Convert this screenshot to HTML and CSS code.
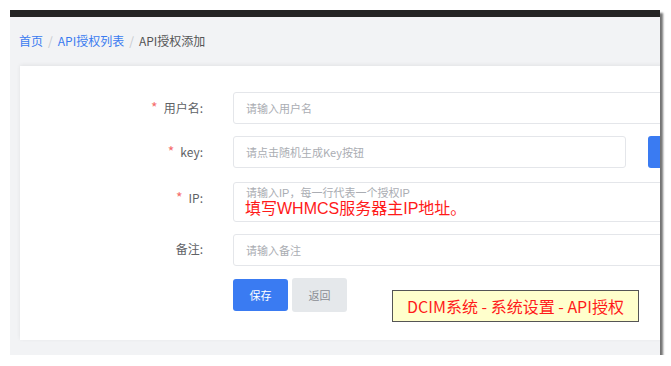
FILE: index.html
```html
<!DOCTYPE html>
<html lang="zh-CN">
<head>
<meta charset="utf-8">
<link rel="stylesheet" href="styles.css">
</head>
<body>
<div class="window">
  <div class="topbar"></div>
  <div class="content">
    <div class="breadcrumb">
      <a class="crumb-link">首页</a><span class="sep">/</span><a class="crumb-link">API授权列表</a><span class="sep">/</span><span class="crumb-current">API授权添加</span>
    </div>
    <div class="card">
      <div class="form">
        <div class="row">
          <label class="label"><span class="req">*</span>用户名:</label>
          <div class="field"><div class="input wide">请输入用户名</div></div>
        </div>
        <div class="row">
          <label class="label"><span class="req">*</span>key:</label>
          <div class="field key-field"><div class="input key">请点击随机生成Key按钮</div><div class="gen-btn"></div></div>
        </div>
        <div class="row row-ip">
          <label class="label"><span class="req">*</span>IP:</label>
          <div class="field"><div class="input wide textarea"><span class="ph">请输入IP，每一行代表一个授权IP</span></div><div class="note-red">填写WHMCS服务器主IP地址。</div></div>
        </div>
        <div class="row">
          <label class="label">备注:</label>
          <div class="field"><div class="input wide">请输入备注</div></div>
        </div>
        <div class="row row-actions">
          <div class="label"></div>
          <div class="field btns"><button class="btn primary">保存</button><button class="btn plain">返回</button></div>
        </div>
      </div>
      <div class="annot">DCIM系统 - 系统设置 - API授权</div>
    </div>
  </div>
</div>
</body>
</html>
```

FILE: styles.css
```css
html, body {
  margin: 0;
  padding: 0;
  background: #ffffff;
  font-family: "Noto Sans CJK SC", "Noto Sans", sans-serif;
}
.window {
  margin: 10px 0 0 10px;
  width: 650px;
  height: 345px;
  overflow: hidden;
  background: #f2f3f5;
  box-shadow: 3px 3px 2px rgba(0,0,0,0.55);
  position: relative;
}
.topbar {
  height: 7px;
  background: #242424;
}
.content {
  padding: 14px 0 0 9px;
}
.breadcrumb {
  height: 20px;
  line-height: 20px;
  font-size: 12px;
  color: #555;
  white-space: nowrap;
}
.crumb-link { color: #3a7bf0; }
.sep { color: #c6c9ce; margin: 0 5px; }
.crumb-current { color: #555; }
.card {
  margin: 15px 0 0 1px;
  width: 700px;
  height: 274px;
  background: #fff;
  box-shadow: 0 -1px 4px rgba(0,0,0,0.07);
  position: relative;
  box-sizing: border-box;
  padding-top: 26px;
}
.form {
  display: flex;
  flex-direction: column;
  gap: 12px;
}
.row {
  display: flex;
}
.row-ip { margin-top: 2px; }
.row-actions { margin-top: 1px; }
.label {
  width: 183px;
  flex: none;
  text-align: right;
  padding-right: 30px;
  font-size: 12px;
  color: #606266;
  line-height: 30px;
}
.req {
  color: #f56c6c;
  font-size: 14px;
  margin-right: 6px;
}
.field {
  position: relative;
  display: flex;
}
.input {
  box-sizing: border-box;
  height: 32px;
  border: 1px solid #e4e6ea;
  border-radius: 3px;
  padding: 0 12px;
  font-size: 11px;
  color: #aaadb3;
  line-height: 30px;
  white-space: nowrap;
}
.wide { width: 500px; }
.key { width: 393px; }
.textarea {
  height: 40px;
  line-height: 11px;
  padding-top: 4px;
}
.ph {
  display: inline-block;
  line-height: 11px;
  font-family: "Liberation Sans", "Noto Sans CJK SC", sans-serif;
}
.key-field { gap: 22px; }
.gen-btn {
  width: 80px;
  height: 32px;
  background: #3a7bf2;
  border-radius: 3px;
}
.note-red {
  position: absolute;
  left: 12px;
  top: 19px;
  font-size: 16px;
  line-height: 16px;
  color: #ff1a1a;
  font-family: "Liberation Sans", "Noto Sans CJK SC", sans-serif;
  white-space: nowrap;
}
.btns { gap: 4px; }
.btn {
  width: 55px;
  height: 32px;
  border: 0;
  border-radius: 3px;
  font-size: 11px;
  font-family: "Noto Sans CJK SC", sans-serif;
  padding: 0;
}
.primary { background: #3a7bf2; color: #fff; }
.plain { background: #e5e8eb; color: #8a8d93; height: 34px; margin-top: -1px; }
.annot {
  position: absolute;
  left: 372px;
  top: 224px;
  width: 247px;
  height: 32px;
  box-sizing: border-box;
  border: 1px solid #555;
  background: #ffffcc;
  color: #ff1a1a;
  font-size: 16px;
  line-height: 30px;
  text-align: center;
  white-space: nowrap;
}
```
